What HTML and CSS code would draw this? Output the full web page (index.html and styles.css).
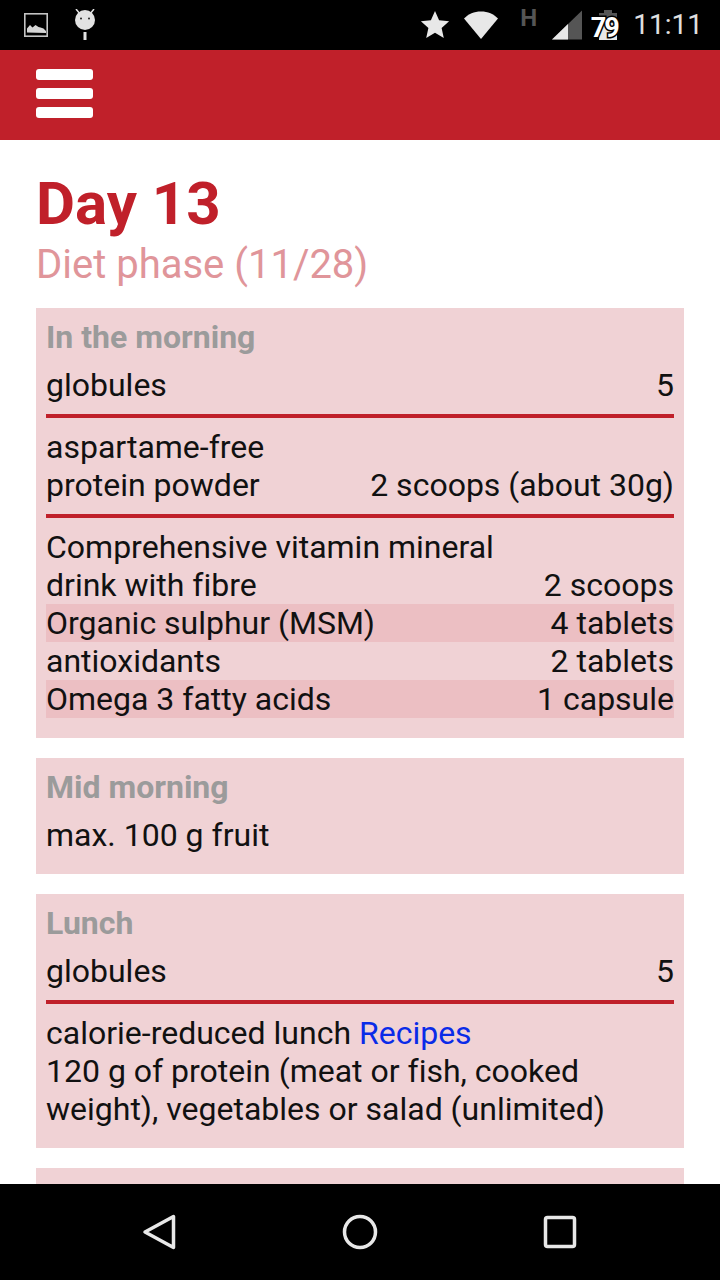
FILE: index.html
```html
<!DOCTYPE html>
<html lang="en">
<head>
<meta charset="utf-8">
<title>Day 13</title>
<link rel="stylesheet" href="styles.css">
</head>
<body>
<div class="screen">
  <header class="status">
    <div class="status-left">
      <svg class="ic-image" width="24" height="24" viewBox="0 0 24 24"><rect x="0.800" y="0.800" width="22.400" height="22.400" fill="none" stroke="#c4c4c4" stroke-width="1.600"/><path d="M3 19.500V15.500l3-3.500 2.500 2.500 3-2.500 3 2 2 .5 3 1 2.500 2.500v2z" fill="#d6d6d6"/></svg>
      <svg class="ic-bug" width="22" height="32" viewBox="0 0 22 32"><path d="M2 0l4 5M20 0l-4 5" stroke="#e2e2e2" stroke-width="1.500" fill="none"/><circle cx="11" cy="11" r="10" fill="#e2e2e2"/><circle cx="7" cy="9.500" r="1" fill="#222"/><circle cx="15" cy="9.500" r="1" fill="#222"/><rect x="9.500" y="23" width="3" height="8" fill="#e2e2e2"/></svg>
    </div>
    <div class="status-right">
      <svg class="ic-star" width="30" height="30" viewBox="0 0 30 30"><path d="M15 1l4.100 9.300 10 1-7.500 6.700 2.200 9.900L15 22.800l-8.800 5.100 2.200-9.900L.9 11.300l10-1z" fill="#e8e8e8"/></svg>
      <svg class="ic-wifi" width="36" height="30" viewBox="0 0 36 30"><path d="M1 8.500C5.500 4 11 1.500 18 1.500S30.500 4 35 8.500L18 29z" fill="#e8e8e8"/></svg>
      <span class="net">H</span>
      <svg class="ic-signal" width="32" height="30" viewBox="0 0 32 30"><path d="M1 29.500 31 .5v29z" fill="#555"/><path d="M1 29.500 17 14v15.500z" fill="#e8e8e8"/></svg>
      <div class="battery">
        <svg width="20" height="30" viewBox="0 0 20 30"><path d="M6 0h8v3h5v27H1V3h5z" fill="#555"/><path d="M1 13h18v17H1z" fill="#e8e8e8"/></svg>
        <span class="batt-num">79</span>
      </div>
      <span class="clock">11:11</span>
    </div>
  </header>
  <div class="appbar">
    <div class="menu"><span></span><span></span><span></span></div>
  </div>
  <main class="content">
    <h1 class="title">Day 13</h1>
    <p class="subtitle">Diet phase (11/28)</p>

    <section class="card">
      <h2 class="card-head">In the morning</h2>
      <div class="row ruled"><span>globules</span><span>5</span></div>
      <div class="row ruled"><span>aspartame-free<br>protein powder</span><span>2 scoops (about 30g)</span></div>
      <div class="row"><span>Comprehensive vitamin mineral<br>drink with fibre</span><span>2 scoops</span></div>
      <div class="row shade"><span>Organic sulphur (MSM)</span><span>4 tablets</span></div>
      <div class="row"><span>antioxidants</span><span>2 tablets</span></div>
      <div class="row shade"><span>Omega 3 fatty acids</span><span>1 capsule</span></div>
    </section>

    <section class="card">
      <h2 class="card-head">Mid morning</h2>
      <div class="row"><span>max. 100 g fruit</span></div>
    </section>

    <section class="card">
      <h2 class="card-head">Lunch</h2>
      <div class="row ruled"><span>globules</span><span>5</span></div>
      <div class="row"><span>calorie-reduced lunch <a class="link" href="#">Recipes</a><br>120 g of protein (meat or fish, cooked<br>weight), vegetables or salad (unlimited)</span></div>
    </section>

    <section class="card card-next"></section>
  </main>
  <nav class="navbar">
    <svg width="40" height="40" viewBox="0 0 40 40"><path d="M33.500 4.500v31L5 20z" fill="none" stroke="#e8e8e8" stroke-width="3.500" stroke-linejoin="round"/></svg>
    <svg width="40" height="40" viewBox="0 0 40 40"><circle cx="20" cy="20" r="15.500" fill="none" stroke="#e8e8e8" stroke-width="3.500"/></svg>
    <svg width="40" height="40" viewBox="0 0 40 40"><rect x="5.500" y="5.500" width="29" height="29" rx="2" fill="none" stroke="#e8e8e8" stroke-width="3.500"/></svg>
  </nav>
</div>
</body>
</html>
```

FILE: styles.css
```css
* { box-sizing: border-box; }
html, body { margin: 0; padding: 0; }
body { background: #fff; font-family: Roboto, "Noto Sans", sans-serif; font-variant-ligatures: none; }
.screen { width: 720px; height: 1280px; display: flex; flex-direction: column; overflow: hidden; }

.status { height: 50px; flex: none; background: #000; display: flex; justify-content: space-between; align-items: center; padding: 0 17px 0 24px; }
.status-left { display: flex; align-items: center; gap: 26px; }
.status-right { display: flex; align-items: center; }
.ic-star { margin-right: 13px; }
.ic-wifi { margin-right: 21px; }
.net { font-size: 24px; font-weight: 700; color: #555; margin: -14px 14px 0 0; width: 17px; line-height: 24px; }
.ic-signal { margin-right: 7px; }
.battery { position: relative; width: 28px; height: 30px; display: flex; justify-content: flex-end; margin-right: 15px; }
.batt-num { position: absolute; left: -1px; top: 5px; width: 30px; text-align: center; font-size: 27px; line-height: 26px; font-weight: 700; color: #fff; letter-spacing: -2px; -webkit-text-stroke: 3px #000; paint-order: stroke fill; }
.clock { font-size: 28px; color: #e0e0e0; line-height: 32px; }

.appbar { height: 90px; flex: none; background: #c0202a; padding: 19px 36px; }
.menu { width: 57px; display: flex; flex-direction: column; gap: 8px; }
.menu span { height: 11px; background: #fff; border-radius: 3px; }

.content { flex: 1; min-height: 0; overflow: hidden; padding: 32px 36px 0; }
.title { margin: 0; font-size: 60px; line-height: 64px; font-weight: 700; color: #c0202a; }
.subtitle { margin: 3px 0 17px; font-size: 40px; line-height: 52px; color: #e0959a; }

.card { background: #f0d2d5; padding: 10px 10px 20px; margin-bottom: 20px; }
.card-head { margin: 0 0 10px; font-size: 32px; line-height: 38px; font-weight: 700; color: #9b9b9b; }
.row { display: flex; justify-content: space-between; align-items: flex-end; font-size: 32px; line-height: 38px; color: #111; }
.row.ruled { padding-bottom: 10px; border-bottom: 4px solid #c0202a; margin-bottom: 10px; }
.row.shade { background: #ecbfc3; }
.link { color: #0a2be8; text-decoration: none; }
.card-next { height: 60px; }

.navbar { height: 96px; flex: none; background: #000; display: flex; justify-content: space-between; align-items: center; padding: 0 140px; }
```
